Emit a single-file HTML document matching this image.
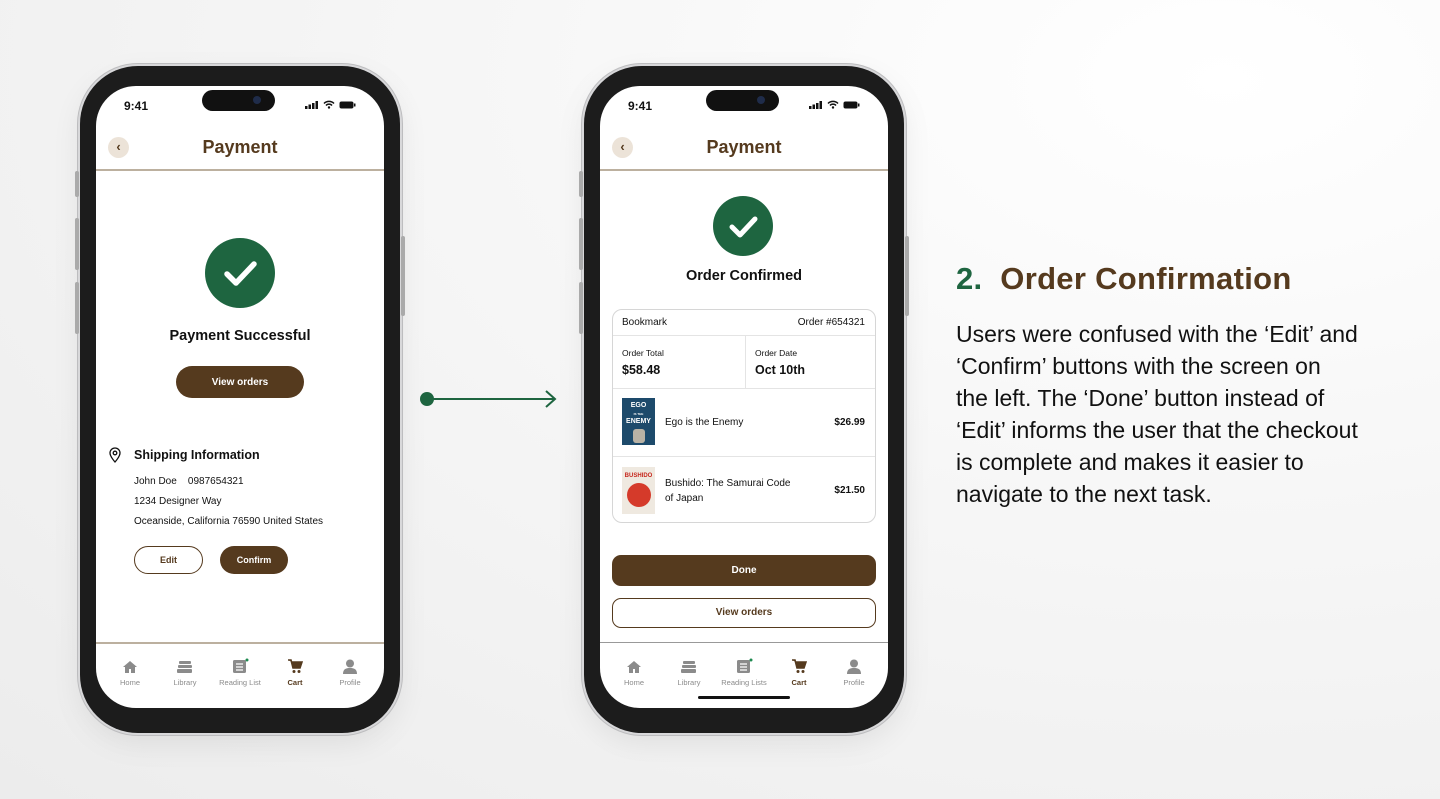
<!DOCTYPE html>
<html><head><meta charset="utf-8">
<style>
*{margin:0;padding:0;box-sizing:border-box}
body{width:1440px;height:799px;overflow:hidden;font-family:"Liberation Sans",sans-serif;background:radial-gradient(ellipse at 85% 10%,#ffffff 0%,#f7f7f7 40%,#ececec 100%);position:relative}
.abs{position:absolute}
.phone{position:absolute;top:66px;width:320px;height:667px;border-radius:58px;background:#1c1c1c;box-shadow:0 0 0 2px #d8d8da,0 0 0 3px #bdbdbf,0 10px 30px rgba(0,0,0,.08)}
.btn-side{position:absolute;width:4px;background:#aaa;border-radius:2px}
.screen{position:absolute;left:16px;top:20px;width:288px;height:622px;border-radius:40px;background:#fff;overflow:hidden;color:#111}
.island{position:absolute;left:106px;top:4px;width:73px;height:21px;border-radius:11px;background:#111}
.island i{position:absolute;right:14px;top:6px;width:8px;height:8px;border-radius:50%;background:#1f2c4a}
.time{position:absolute;left:28px;top:13px;font-size:12px;font-weight:bold}
.stat{position:absolute;right:28px;top:14px;display:flex;gap:4px;align-items:center}
.title{position:absolute;left:0;width:288px;top:51px;text-align:center;font-size:18px;font-weight:bold;color:#553a1e}
.back{position:absolute;left:12px;top:51px;width:21px;height:21px;border-radius:50%;background:#ece3d8;color:#553a1e;font-size:13px;font-weight:bold;text-align:center;line-height:20px}
.hr{position:absolute;left:0;width:288px;height:2px;background:#bcb09f}
.check{position:absolute;border-radius:50%;background:#1e6540}
.tabs{position:absolute;left:0;top:562px;width:288px;height:50px}
.tab{position:absolute;top:12px;width:56px;text-align:center;font-size:7.5px;color:#8b8b8b}
.tab svg{display:block;margin:0 auto 4px}
.tab.act{color:#553a1e;font-weight:bold}
.pill{position:absolute;border-radius:16px;text-align:center;font-weight:bold;font-size:10px}
.fill{background:#553a1e;color:#fff}
.out{border:1.5px solid #553a1e;color:#553a1e;background:#fff}
</style></head><body>

<div class="phone" style="left:80px">
<div class="btn-side" style="left:-5px;top:105px;height:26px"></div>
<div class="btn-side" style="left:-5px;top:152px;height:52px"></div>
<div class="btn-side" style="left:-5px;top:216px;height:52px"></div>
<div class="btn-side" style="right:-5px;top:170px;height:80px"></div>
<div class="screen">
 <div class="island"><i></i></div>
 <div class="time">9:41</div>
 <div class="stat"><svg width="14" height="8"><rect x="0" y="5" width="2.5" height="3" fill="#111"/><rect x="3.5" y="3.5" width="2.5" height="4.5" fill="#111"/><rect x="7" y="2" width="2.5" height="6" fill="#111"/><rect x="10.5" y="0" width="2.5" height="8" fill="#111"/></svg><svg width="12" height="9" viewBox="0 0 12 9"><path d="M1 3.5a7 7 0 0 1 10 0M3 5.5a4 4 0 0 1 6 0" stroke="#111" stroke-width="1.5" fill="none"/><circle cx="6" cy="7.5" r="1.2" fill="#111"/></svg><svg width="17" height="8"><rect x="0.5" y="0.5" width="14" height="7" rx="2" fill="#111"/><rect x="15" y="2.5" width="1.5" height="3" fill="#111"/></svg></div>
 <div class="back">‹</div>
 <div class="title">Payment</div>
 <div class="hr" style="top:83px"></div>
 <div class="check" style="left:109px;top:152px;width:70px;height:70px"><svg width="70" height="70"><path d="M22 36l9 9 18-19" stroke="#fff" stroke-width="5.5" fill="none" stroke-linecap="round" stroke-linejoin="round"/></svg></div>
 <div class="abs" style="left:0;width:288px;top:242px;text-align:center;font-size:14.5px;font-weight:bold">Payment Successful</div>
 <div class="pill fill" style="left:80px;top:280px;width:128px;height:32px;line-height:33px">View orders</div>
 <svg class="abs" style="left:13px;top:361px" width="12" height="16" viewBox="0 0 12 16"><path d="M6 15s-5-5.5-5-9a5 5 0 0 1 10 0c0 3.5-5 9-5 9z" stroke="#111" stroke-width="1.3" fill="none"/><circle cx="6" cy="6" r="1.8" stroke="#111" stroke-width="1.3" fill="none"/></svg>
 <div class="abs" style="left:38px;top:362px;font-size:12.5px;font-weight:bold">Shipping Information</div>
 <div class="abs" style="left:38px;top:386px;font-size:10px;line-height:20px">John Doe&nbsp;&nbsp;&nbsp;&nbsp;0987654321<br>1234 Designer Way<br>Oceanside, California 76590 United States</div>
 <div class="pill out" style="left:38px;top:460px;width:69px;height:28px;line-height:27px;font-size:9px">Edit</div>
 <div class="pill fill" style="left:124px;top:460px;width:68px;height:28px;line-height:29px;font-size:9px">Confirm</div>
 <div class="hr" style="top:556px"></div>
 <div class="tabs">
  <div class="tab" style="left:6px"><svg width="16" height="14"><path d="M8 1L1 7h2v6h4v-4h2v4h4V7h2z" fill="#8b8b8b"/></svg>Home</div>
  <div class="tab" style="left:61px"><svg width="18" height="14"><rect x="3" y="1" width="12" height="3" rx="1" fill="#8b8b8b"/><rect x="2" y="5" width="14" height="3" rx="1" fill="#8b8b8b"/><rect x="1" y="9" width="15" height="4" rx="1" fill="#8b8b8b"/></svg>Library</div>
  <div class="tab" style="left:116px;top:10px"><svg width="18" height="16"><rect x="2" y="2" width="13" height="13" rx="1.5" fill="#8b8b8b"/><path d="M5 6h7M5 9h7M5 12h7" stroke="#fff" stroke-width="1.2"/><circle cx="16" cy="2" r="1.5" fill="#1e8a50"/></svg>Reading List</div>
  <div class="tab act" style="left:171px;top:11px"><svg width="16" height="15"><path d="M1 1h3l2 8h7l2-6H5" stroke="#553a1e" stroke-width="1.6" fill="#553a1e"/><circle cx="7" cy="12.5" r="1.5" fill="#553a1e"/><circle cx="12" cy="12.5" r="1.5" fill="#553a1e"/></svg>Cart</div>
  <div class="tab" style="left:226px;top:11px"><svg width="16" height="15"><circle cx="8" cy="4.5" r="4" fill="#8b8b8b"/><path d="M1 15c0-5 3-6 7-6s7 1 7 6z" fill="#8b8b8b"/></svg>Profile</div>
 </div>
</div></div>

<svg class="abs" style="left:418px;top:388px" width="142" height="22"><circle cx="9" cy="11" r="7" fill="#1e6540"/><path d="M9 11h128M128 3l9 8-9 8" stroke="#1e6540" stroke-width="2" fill="none"/></svg>

<div class="phone" style="left:584px">
<div class="btn-side" style="left:-5px;top:105px;height:26px"></div>
<div class="btn-side" style="left:-5px;top:152px;height:52px"></div>
<div class="btn-side" style="left:-5px;top:216px;height:52px"></div>
<div class="btn-side" style="right:-5px;top:170px;height:80px"></div>
<div class="screen">
 <div class="island"><i></i></div>
 <div class="time">9:41</div>
 <div class="stat"><svg width="14" height="8"><rect x="0" y="5" width="2.5" height="3" fill="#111"/><rect x="3.5" y="3.5" width="2.5" height="4.5" fill="#111"/><rect x="7" y="2" width="2.5" height="6" fill="#111"/><rect x="10.5" y="0" width="2.5" height="8" fill="#111"/></svg><svg width="12" height="9" viewBox="0 0 12 9"><path d="M1 3.5a7 7 0 0 1 10 0M3 5.5a4 4 0 0 1 6 0" stroke="#111" stroke-width="1.5" fill="none"/><circle cx="6" cy="7.5" r="1.2" fill="#111"/></svg><svg width="17" height="8"><rect x="0.5" y="0.5" width="14" height="7" rx="2" fill="#111"/><rect x="15" y="2.5" width="1.5" height="3" fill="#111"/></svg></div>
 <div class="back">‹</div>
 <div class="title">Payment</div>
 <div class="hr" style="top:83px"></div>
 <div class="check" style="left:113px;top:110px;width:60px;height:60px"><svg width="60" height="60"><path d="M19 31l8 8 15-16" stroke="#fff" stroke-width="5" fill="none" stroke-linecap="round" stroke-linejoin="round"/></svg></div>
 <div class="abs" style="left:0;width:288px;top:182px;text-align:center;font-size:14.5px;font-weight:bold">Order Confirmed</div>
 <div class="abs" style="left:12px;top:223px;width:264px;height:214px;border:1px solid #d6d6d6;border-radius:10px;font-size:10px">
  <div class="abs" style="left:9px;top:7px">Bookmark</div>
  <div class="abs" style="right:10px;top:7px">Order #654321</div>
  <div class="abs" style="left:0;top:25px;width:262px;border-top:1px solid #e4e4e4"></div>
  <div class="abs" style="left:132px;top:25px;height:53px;border-left:1px solid #e4e4e4"></div>
  <div class="abs" style="left:9px;top:38px;font-size:8.5px">Order Total</div>
  <div class="abs" style="left:9px;top:53px;font-size:12.5px;font-weight:bold">$58.48</div>
  <div class="abs" style="left:142px;top:38px;font-size:8.5px">Order Date</div>
  <div class="abs" style="left:142px;top:53px;font-size:12.5px;font-weight:bold">Oct 10th</div>
  <div class="abs" style="left:0;top:78px;width:262px;border-top:1px solid #e4e4e4"></div>
  <div class="abs" style="left:9px;top:88px;width:33px;height:47px;background:#1d4a6b;color:#fff;font-size:7px;font-weight:bold;text-align:center;line-height:8px;padding-top:4px">EGO<br><span style="font-size:3px">IS THE</span><br>ENEMY<div style="width:12px;height:14px;margin:3px auto 0;background:#b9b2a5;border-radius:3px"></div></div>
  <div class="abs" style="left:52px;top:107px">Ego is the Enemy</div>
  <div class="abs" style="right:10px;top:107px;font-weight:bold">$26.99</div>
  <div class="abs" style="left:0;top:146px;width:262px;border-top:1px solid #e4e4e4"></div>
  <div class="abs" style="left:9px;top:157px;width:33px;height:47px;background:#efe9e0;overflow:hidden"><div style="margin-top:6px;font-size:6px;font-weight:bold;color:#c7281e;text-align:center">BUSHIDO</div><div style="width:24px;height:24px;border-radius:50%;background:#d53a2a;margin:4px auto 0"></div></div>
  <div class="abs" style="left:52px;top:166px;line-height:15px">Bushido: The Samurai Code<br>of Japan</div>
  <div class="abs" style="right:10px;top:175px;font-weight:bold">$21.50</div>
 </div>
 <div class="pill fill" style="left:12px;top:469px;width:264px;height:31px;line-height:32px;border-radius:9px">Done</div>
 <div class="pill out" style="left:12px;top:512px;width:264px;height:30px;line-height:28px;border-radius:9px">View orders</div>
 <div class="hr" style="top:556px;height:1px;background:#999"></div>
 <div class="tabs">
  <div class="tab" style="left:6px"><svg width="16" height="14"><path d="M8 1L1 7h2v6h4v-4h2v4h4V7h2z" fill="#8b8b8b"/></svg>Home</div>
  <div class="tab" style="left:61px"><svg width="18" height="14"><rect x="3" y="1" width="12" height="3" rx="1" fill="#8b8b8b"/><rect x="2" y="5" width="14" height="3" rx="1" fill="#8b8b8b"/><rect x="1" y="9" width="15" height="4" rx="1" fill="#8b8b8b"/></svg>Library</div>
  <div class="tab" style="left:116px;top:10px"><svg width="18" height="16"><rect x="2" y="2" width="13" height="13" rx="1.5" fill="#8b8b8b"/><path d="M5 6h7M5 9h7M5 12h7" stroke="#fff" stroke-width="1.2"/><circle cx="16" cy="2" r="1.5" fill="#1e8a50"/></svg>Reading Lists</div>
  <div class="tab act" style="left:171px;top:11px"><svg width="16" height="15"><path d="M1 1h3l2 8h7l2-6H5" stroke="#553a1e" stroke-width="1.6" fill="#553a1e"/><circle cx="7" cy="12.5" r="1.5" fill="#553a1e"/><circle cx="12" cy="12.5" r="1.5" fill="#553a1e"/></svg>Cart</div>
  <div class="tab" style="left:226px;top:11px"><svg width="16" height="15"><circle cx="8" cy="4.5" r="4" fill="#8b8b8b"/><path d="M1 15c0-5 3-6 7-6s7 1 7 6z" fill="#8b8b8b"/></svg>Profile</div>
 </div>
 <div class="abs" style="left:98px;top:610px;width:92px;height:3px;border-radius:2px;background:#111"></div>
</div></div>

<div class="abs" style="left:956px;top:261px;font-size:31px;font-weight:bold;color:#553a1e;letter-spacing:0.3px"><span style="color:#1e6540">2.</span>&nbsp; Order Confirmation</div>
<div class="abs" style="left:956px;top:318px;white-space:nowrap;font-size:23px;line-height:32px;color:#111">Users were confused with the ‘Edit’ and<br>‘Confirm’ buttons with the screen on<br>the left. The ‘Done’ button instead of<br>‘Edit’ informs the user that the checkout<br>is complete and makes it easier to<br>navigate to the next task.</div>
</body></html>
